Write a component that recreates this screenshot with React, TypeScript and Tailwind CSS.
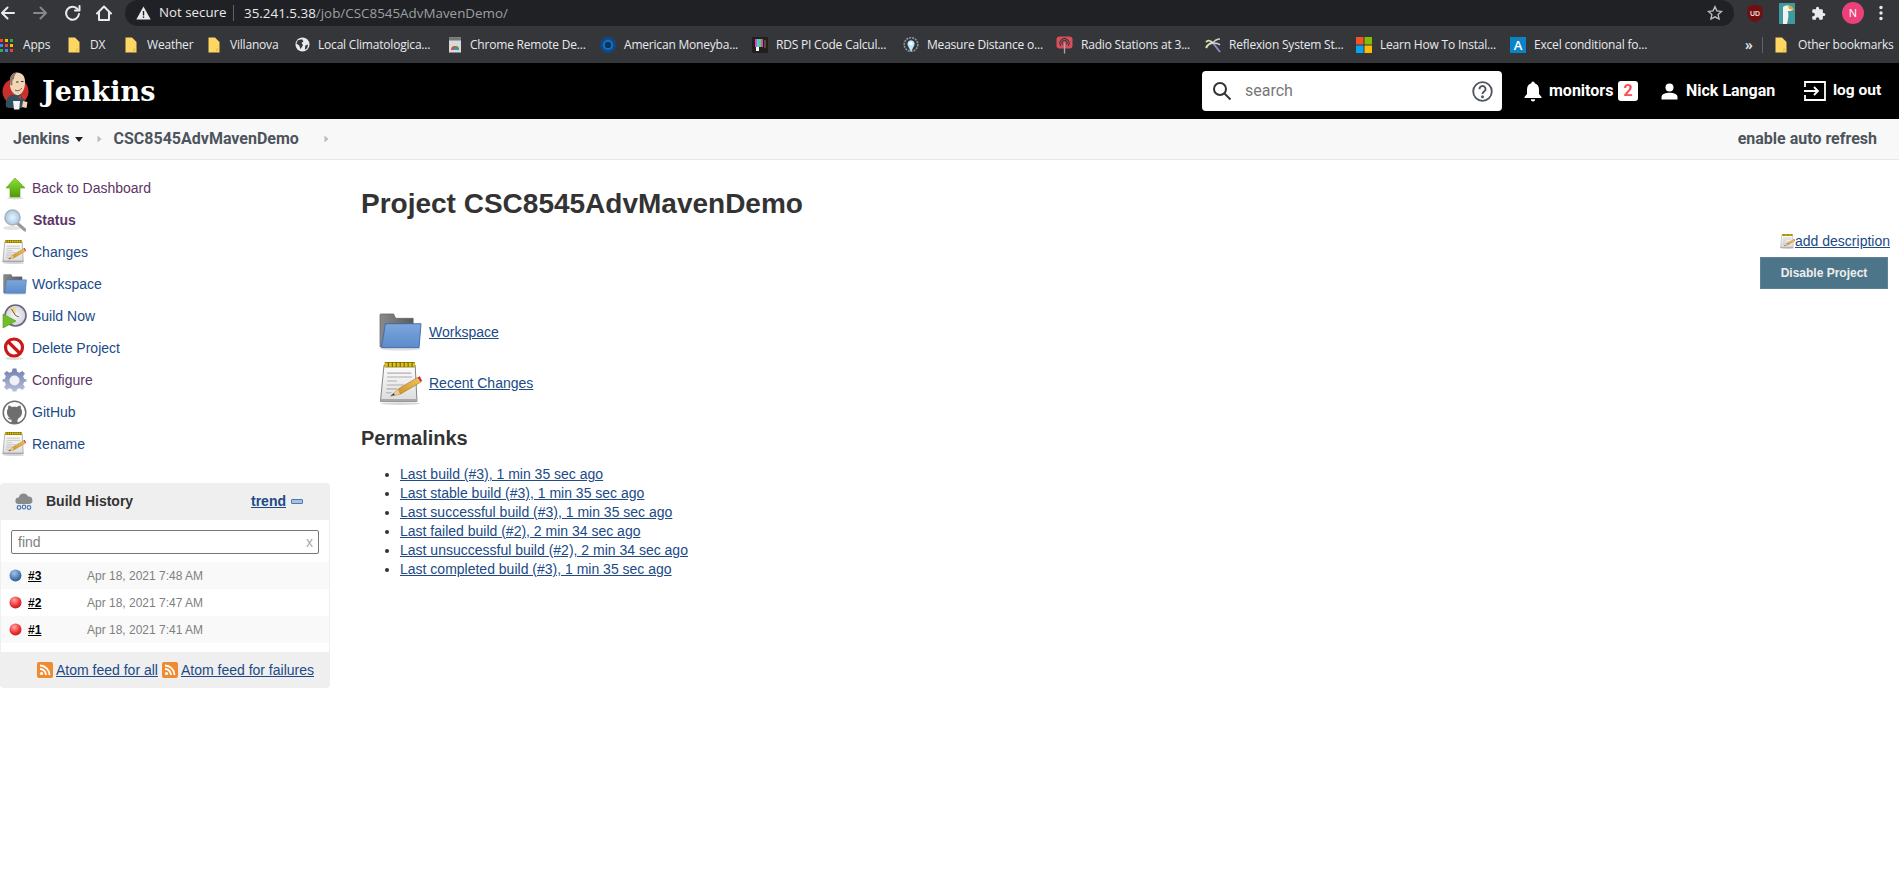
import React from "react";

const Folder = () => (
  <svg width="12" height="16" viewBox="0 0 12 16" className="shrink-0 mr-[2px]">
    <path d="M0.5 0.5H7L11.5 5V15.5H0.5Z" fill="#fdd663" />
    <path d="M8 15.5V11.5H11.5Z" fill="#f3c33f" />
  </svg>
);

const Globe = () => (
  <svg width="15" height="15" viewBox="0 0 16 16" className="shrink-0">
    <circle cx="8" cy="8" r="7.5" fill="#e8eaed" />
    <path d="M3 3.5L7.5 2.5L9 4.5L7 6.5L8.5 8.5L6 13L4.5 9L1.5 7ZM11 9L14 8L13 12L10.5 13.5Z" fill="#35363a" />
  </svg>
);

const ChromeRemote = () => (
  <svg width="14" height="16" viewBox="0 0 14 16" className="shrink-0">
    <rect x="1" y="0.5" width="12" height="15" fill="#d9d9d9" />
    <rect x="1" y="0.5" width="12" height="3" fill="#777" />
    <path d="M3 13A4 4 0 0 1 11 13Z" fill="#e94235" />
    <path d="M7 13V9A4 4 0 0 1 11 13Z" fill="#34a853" />
    <path d="M5 13A2 2 0 0 1 9 13Z" fill="#4285f4" />
  </svg>
);

const AmericanIcon = () => (
  <svg width="16" height="16" viewBox="0 0 16 16" className="shrink-0">
    <circle cx="8" cy="8" r="8" fill="#0d4a8a" />
    <circle cx="8" cy="8" r="5" fill="#1b75bc" />
    <circle cx="8" cy="8" r="3.2" fill="#083463" />
  </svg>
);

const RdsIcon = () => (
  <svg width="16" height="16" viewBox="0 0 16 16" className="shrink-0">
    <rect width="16" height="16" fill="#231f1c" />
    <rect x="3" y="2" width="2" height="8" fill="#ee3fc7" />
    <rect x="5" y="2" width="2" height="8" fill="#39d2ef" />
    <rect x="7" y="2" width="2" height="8" fill="#3ee64b" />
    <rect x="9" y="2" width="2" height="8" fill="#ee3fc7" />
    <rect x="4" y="10" width="3" height="4" fill="#fff" />
    <rect x="12" y="3" width="2" height="8" fill="#5a4b40" />
  </svg>
);

const MeasureIcon = () => (
  <svg width="16" height="16" viewBox="0 0 16 16" className="shrink-0">
    <circle cx="8" cy="7.5" r="6.8" fill="none" stroke="#8c969c" strokeWidth="1.6" strokeDasharray="2 1" />
    <path d="M8 15L4.8 8.5A3.6 3.6 0 1 1 11.2 8.5Z" fill="#bfe6fb" />
    <circle cx="8" cy="6.5" r="1.6" fill="#fff" />
  </svg>
);

const RadioIcon = () => (
  <svg width="17" height="18" viewBox="0 0 17 18" className="shrink-0">
    <rect x="0.5" y="0.5" width="16" height="12" rx="3" fill="#d8505a" />
    <path d="M5 10A4.5 4.5 0 1 1 12 10M6.6 8.5A2.5 2.5 0 1 1 10.4 8.5" fill="none" stroke="#35363a" strokeWidth="1.1" />
    <path d="M8.5 7V17.5" stroke="#aaa" strokeWidth="1.3" />
  </svg>
);

const PalmIcon = () => (
  <svg width="16" height="16" viewBox="0 0 16 16" className="shrink-0">
    <path d="M8 6L15 15" stroke="#8a8cc7" strokeWidth="2" />
    <path d="M8 6C5 3 3 3 1 5M8 6C5 6 3 7 1 11" fill="none" stroke="#d9dfb8" strokeWidth="2" />
    <path d="M8 6C10 3 12 2 15 2M8 6C10 6 13 6 15 8" fill="none" stroke="#cfcfcf" strokeWidth="1.6" />
  </svg>
);

const MsIcon = () => (
  <svg width="16" height="16" viewBox="0 0 16 16" className="shrink-0">
    <rect width="7.5" height="7.5" fill="#f35325" />
    <rect x="8.5" width="7.5" height="7.5" fill="#81bc06" />
    <rect y="8.5" width="7.5" height="7.5" fill="#05a6f0" />
    <rect x="8.5" y="8.5" width="7.5" height="7.5" fill="#ffba08" />
  </svg>
);

const Bookmark = ({ w, icon, label }: { w: string; icon: React.ReactNode; label: string }) => (
  <div className={`flex items-center gap-2 shrink-0 ${w}`}>
    {icon}
    <span className="whitespace-nowrap">{label}</span>
  </div>
);

const ChromeBar = () => (
  <div className="font-['Open_Sans',sans-serif] text-[#e8eaed]">
    <div className="h-[26px] bg-[#35363a] flex items-center relative">
      <div className="w-[125px] flex items-center pl-[1px] shrink-0">
        <svg width="124" height="20" viewBox="0 0 124 20" fill="none" strokeWidth="2" strokeLinecap="round" strokeLinejoin="round">
          <path d="M13 10H1.5M6.5 4.5L1 10L6.5 15.5" stroke="#e8eaed" />
          <path d="M33 10H44.5M39.5 4.5L45 10L39.5 15.5" stroke="#86888c" />
          <path d="M76.5 6A6.5 6.5 0 1 0 78 11" stroke="#e8eaed" />
          <path d="M78.5 3V7.5H74" stroke="#e8eaed" />
          <path d="M96 10.5L103 3.5L110 10.5M98 9V17H108V9" stroke="#e8eaed" />
        </svg>
      </div>
      <div className="h-[26px] w-[1609px] bg-[#202124] rounded-l-[14px] rounded-r-[14px] flex items-center text-[14px] shrink-0">
        <svg width="15" height="14" viewBox="0 0 15 14" className="ml-[11px] shrink-0">
          <path d="M7.5 0.5L14.7 13.5H0.3Z" fill="#e8eaed" />
          <rect x="6.8" y="5" width="1.4" height="4.5" fill="#202124" />
          <rect x="6.8" y="10.4" width="1.4" height="1.5" fill="#202124" />
        </svg>
        <span className="ml-[8px] whitespace-nowrap w-[68px] text-[13.3px]">Not secure</span>
        <span className="ml-[6px] w-px h-[16px] bg-[#5f6368]" />
        <span className="ml-[10px] whitespace-nowrap text-[13.4px]">
          <span className="text-[#e8eaed]">35.241.5.38</span>
          <span className="text-[#9aa0a6]">/job/CSC8545AdvMavenDemo/</span>
        </span>
        <div className="ml-auto mr-[11px]">
          <svg width="16" height="16" viewBox="0 0 24 24" fill="none" stroke="#bdc1c6" strokeWidth="2">
            <path d="M12 2.5L14.9 8.8L21.8 9.6L16.7 14.3L18.1 21.1L12 17.7L5.9 21.1L7.3 14.3L2.2 9.6L9.1 8.8Z" />
          </svg>
        </div>
      </div>
      <div className="flex items-center ml-[13px] gap-[16px]">
        <svg width="16" height="19" viewBox="0 0 16 19">
          <path d="M8 0.5L15.5 3V10C15.5 14 12 17 8 18.5C4 17 0.5 14 0.5 10V3Z" fill="#6f0f12" />
          <text x="8" y="11.5" textAnchor="middle" fontSize="7" fill="#f0d0d0" fontFamily="Liberation Sans" fontWeight="700">UD</text>
        </svg>
        <svg width="16" height="21" viewBox="0 0 16 21">
          <rect width="16" height="21" fill="#3f9a9d" />
          <path d="M4 4C8 1 14 3 14 7C12 8 10 8 9 8C10 12 9 17 8 21H4Z" fill="#f2f2f2" />
          <path d="M9 3C12 3 15 5 15 7L10 6Z" fill="#f2a51f" />
        </svg>
        <svg width="15" height="15" viewBox="0 0 24 24" fill="#e8eaed">
          <path d="M20.5 11H19V7a2 2 0 0 0-2-2h-4V3.5a2.5 2.5 0 0 0-5 0V5H4a2 2 0 0 0-2 2v3.8h1.5a2.7 2.7 0 0 1 0 5.4H2V20a2 2 0 0 0 2 2h3.8v-1.5a2.7 2.7 0 0 1 5.4 0V22H17a2 2 0 0 0 2-2v-4h1.5a2.5 2.5 0 0 0 0-5z" />
        </svg>
        <div className="w-[22px] h-[22px] rounded-full bg-[#ec407a] flex items-center justify-center text-[11px] text-white">N</div>
        <svg width="4" height="16" viewBox="0 0 4 16" fill="#e8eaed" className="ml-[-1px]">
          <circle cx="2" cy="2.5" r="1.7" />
          <circle cx="2" cy="8" r="1.7" />
          <circle cx="2" cy="13.5" r="1.7" />
        </svg>
      </div>
    </div>
    <div className="h-[37px] bg-[#35363a] flex items-center text-[12px] tracking-[-0.2px]">
      <div className="flex items-center gap-[10px] w-[68px] shrink-0">
        <svg width="13" height="14" viewBox="0 0 13 14" className="shrink-0">
          <rect x="0" y="1" width="3" height="3" fill="#ea4335" /><rect x="5" y="1" width="3" height="3" fill="#fbbc05" /><rect x="10" y="1" width="3" height="3" fill="#34a853" />
          <rect x="0" y="6" width="3" height="3" fill="#4285f4" /><rect x="5" y="6" width="3" height="3" fill="#ea4335" /><rect x="10" y="6" width="3" height="3" fill="#fbbc05" />
          <rect x="0" y="11" width="3" height="3" fill="#34a853" /><rect x="5" y="11" width="3" height="3" fill="#4285f4" /><rect x="10" y="11" width="3" height="3" fill="#ea4335" />
        </svg>
        <span>Apps</span>
      </div>
      <Bookmark w="w-[57px]" icon={<Folder />} label="DX" />
      <Bookmark w="w-[83px]" icon={<Folder />} label="Weather" />
      <Bookmark w="w-[87px]" icon={<Folder />} label="Villanova" />
      <Bookmark w="w-[153px]" icon={<Globe />} label="Local Climatologica..." />
      <Bookmark w="w-[152px]" icon={<ChromeRemote />} label="Chrome Remote De..." />
      <Bookmark w="w-[152px]" icon={<AmericanIcon />} label="American Moneyba..." />
      <Bookmark w="w-[151px]" icon={<RdsIcon />} label="RDS PI Code Calcul..." />
      <Bookmark w="w-[153px]" icon={<MeasureIcon />} label="Measure Distance o..." />
      <Bookmark w="w-[149px]" icon={<RadioIcon />} label="Radio Stations at 3..." />
      <Bookmark w="w-[151px]" icon={<PalmIcon />} label="Reflexion System St..." />
      <Bookmark w="w-[154px]" icon={<MsIcon />} label="Learn How To Instal..." />
      <Bookmark
        w="w-[235px]"
        icon={
          <span className="w-[16px] h-[16px] bg-[#0a84c6] text-white text-[13px] leading-[16px] text-center font-semibold shrink-0">A</span>
        }
        label="Excel conditional fo..."
      />
      <span className="w-[17px] text-[14px] font-semibold shrink-0">»</span>
      <span className="w-px h-[16px] bg-[#5f6368] mr-[12px] shrink-0" />
      <Folder />
      <span className="ml-[9px] whitespace-nowrap">Other bookmarks</span>
    </div>
  </div>
);

const JenkinsLogo = () => (
  <svg width="29" height="38" viewBox="0 0 29 38" className="shrink-0">
    <circle cx="14.5" cy="19.5" r="13" fill="#c9302c" />
    <path d="M5 35C4 30 6 25 10 23L19 22C22 24 23 28 23 30L21 36H8Z" fill="#335061" />
    <path d="M9 9C9 3.5 12 0.5 16 0.5C21 0.5 24 4 24 10C24 16 22 21 18 23C14 24 10 20 9 14Z" fill="#f0d6b7" />
    <path d="M9 9C9 3.5 12 0.5 16 0.5C13.5 2.5 13 5 13 7C11.5 7.5 11 9 11.5 13L9.5 13.5Z" fill="#8f7766" />
    <path d="M14 18C16.5 19.5 19 18.5 21 16" fill="none" stroke="#7a4a3a" strokeWidth="1" />
    <path d="M15 10h2.5M20 9.5h2.5" stroke="#333" strokeWidth="1.1" />
    <path d="M17 25L20.5 23L19.5 27ZM21 23L25 24L22 27Z" fill="#d33833" />
    <path d="M12 29H19L18.3 37.5H13Z" fill="#f5f5f5" />
    <path d="M22 29L26.5 30L25.5 36L21 35Z" fill="#f0d6b7" />
  </svg>
);

const Chev = () => (
  <svg width="5" height="8" viewBox="0 0 5 8" className="shrink-0"><path d="M0.5 0.5L4.5 4L0.5 7.5Z" fill="#bcbcbc" /></svg>
);

const TopNav = () => (
  <div className="h-[56px] bg-black flex items-center text-white font-['Roboto',sans-serif] font-bold text-[16px]">
    <div className="w-[42px] pl-[1px] shrink-0 flex items-center"><JenkinsLogo /></div>
    <span className="font-['DejaVu_Serif',serif] text-[27px] w-[1160px] shrink-0 leading-none">Jenkins</span>
    <div className="w-[300px] h-[40px] bg-white rounded-[4px] flex items-center shrink-0">
      <svg width="20" height="20" viewBox="0 0 20 20" fill="none" stroke="#333" strokeWidth="2" className="ml-[10px] shrink-0">
        <circle cx="8" cy="8" r="6" /><path d="M12.5 12.5L18.5 18.5" />
      </svg>
      <span className="ml-[13px] text-[16px] font-normal text-[#777]">search</span>
      <svg width="21" height="21" viewBox="0 0 21 21" fill="none" stroke="#4d545d" strokeWidth="1.8" className="ml-auto mr-[9px] shrink-0">
        <circle cx="10.5" cy="10.5" r="9.3" />
        <path d="M7.5 8.2A3 3 0 1 1 12 10.6C11 11.2 10.5 11.8 10.5 13" />
        <circle cx="10.5" cy="15.8" r="0.6" fill="#4d545d" />
      </svg>
    </div>
    <svg width="18" height="21" viewBox="0 0 18 21" fill="white" className="ml-[22px] shrink-0">
      <path d="M9 0.5A1.7 1.7 0 0 1 10.7 2.2C13.7 3 15 5.5 15 8.5V13L17.5 16V17H0.5V16L3 13V8.5C3 5.5 4.3 3 7.3 2.2A1.7 1.7 0 0 1 9 0.5Z" />
      <path d="M6.8 18.2H11.2A2.2 2.2 0 0 1 6.8 18.2Z" />
    </svg>
    <span className="ml-[7px] w-[69px] shrink-0">monitors</span>
    <span className="w-[20px] h-[20px] rounded-[3px] bg-white text-[#ff4d54] flex items-center justify-center shrink-0">2</span>
    <svg width="17" height="17" viewBox="0 0 17 17" fill="white" className="ml-[23px] shrink-0">
      <circle cx="8.5" cy="4.5" r="4" />
      <path d="M0.5 16.5V14C0.5 11 5 9.7 8.5 9.7C12 9.7 16.5 11 16.5 14V16.5Z" />
    </svg>
    <span className="ml-[8px] w-[118px] shrink-0 whitespace-nowrap">Nick Langan</span>
    <svg width="22" height="20" viewBox="0 0 22 20" fill="none" stroke="white" strokeWidth="1.8" className="shrink-0">
      <path d="M1 6V1H21V19H1V14" />
      <path d="M0 10H14M10 6L14 10L10 14" />
    </svg>
    <span className="ml-[7px] whitespace-nowrap text-[15.5px]">log out</span>
  </div>
);

const Breadcrumb = () => (
  <div className="h-[41px] bg-[#f8f8f8] border-b border-[#e8e8e8] flex items-center font-['Roboto',sans-serif] font-bold text-[16px] text-[#4d545d]">
    <span className="ml-[13px]">Jenkins</span>
    <svg width="8" height="5" viewBox="0 0 8 5" className="ml-[5px] shrink-0"><path d="M0 0H8L4 5Z" fill="#222" /></svg>
    <span className="ml-[14px]"><Chev /></span>
    <span className="ml-[12px]">CSC8545AdvMavenDemo</span>
    <span className="ml-[25px]"><Chev /></span>
    <span className="ml-auto mr-[22px]">enable auto refresh</span>
  </div>
);

const NotepadIcon = ({ size = 24 }: { size?: number }) => (
  <svg width={size} height={size} viewBox="0 0 24 24" className="shrink-0">
    <defs>
      <linearGradient id="np" x1="0" y1="0" x2="0" y2="1"><stop offset="0" stopColor="#fdfdfd" /><stop offset="1" stopColor="#dcdcdc" /></linearGradient>
      <linearGradient id="pc" x1="0" y1="1" x2="1" y2="0"><stop offset="0" stopColor="#c98a1f" /><stop offset="1" stopColor="#f4c35a" /></linearGradient>
    </defs>
    <ellipse cx="12" cy="23.2" rx="11" ry="0.8" fill="#d8d8d8" />
    <path d="M2.8 1.8H20.2L21.2 22H0.8Z" fill="url(#np)" stroke="#777" strokeWidth="0.5" />
    <path d="M0.8 20.6H21.2V22H0.8Z" fill="#a8a8a8" />
    <path d="M3.2 1.5H20" stroke="#7a6a00" strokeWidth="3" />
    <path d="M3.4 1.5H20" stroke="#e0c31a" strokeWidth="2.2" strokeDasharray="1.5 0.7" />
    <path d="M4.5 6.2H18M4.5 8.4H18.3M4.5 10.6H10M4.3 12.8H14M4.1 15H10M4 17.2H7" stroke="#aeaeae" strokeWidth="0.6" />
    <path d="M6.5 19L10.5 15.2L21.6 8.6L23.4 11.2L11.8 18Z" fill="url(#pc)" stroke="#8a6a2a" strokeWidth="0.3" />
    <path d="M21.6 8.6L23.4 11.2L24 10.4L22.8 8Z" fill="#d8232a" />
    <path d="M6.5 19L10.5 15.2L11.8 18Z" fill="#e9c99a" />
    <path d="M6.5 19L8.2 17.4L8.8 18.4Z" fill="#333" />
  </svg>
);

const FolderIcon = ({ size = 24, h = 21, id = "f" }: { size?: number; h?: number; id?: string }) => (
  <svg width={size} height={h} viewBox="0 0 44 38" className="shrink-0">
    <defs>
      <linearGradient id={id} x1="0" y1="0" x2="0" y2="1"><stop offset="0" stopColor="#7da6dc" /><stop offset="1" stopColor="#5b8ccb" /></linearGradient>
      <linearGradient id={`${id}b`} x1="0" y1="0" x2="1" y2="0"><stop offset="0" stopColor="#8a8a8a" /><stop offset="1" stopColor="#5c5c5c" /></linearGradient>
    </defs>
    <ellipse cx="22" cy="36" rx="21" ry="2" fill="#dedede" />
    <path d="M1 34V1.5Q1 0.5 2 0.5H15L17 5H35V11H7L4 34Z" fill={`url(#${id}b)`} stroke="#555" strokeWidth="0.6" />
    <path d="M6.5 10.5H43L41 35H2.5Z" fill={`url(#${id})`} stroke="#3a69a6" strokeWidth="0.9" />
  </svg>
);

const ArrowUp = () => (
  <svg width="24" height="24" viewBox="0 0 24 24" className="shrink-0">
    <defs><linearGradient id="au" x1="0" y1="0" x2="0" y2="1"><stop offset="0" stopColor="#8ae234" /><stop offset="1" stopColor="#4e9a06" /></linearGradient></defs>
    <ellipse cx="13" cy="22" rx="8" ry="1.5" fill="#ddd" />
    <path d="M13 2L23 12H18V21H8V12H4Z" fill="url(#au)" stroke="#5a9a10" strokeWidth="0.6" />
  </svg>
);

const SearchIcon = () => (
  <svg width="24" height="24" viewBox="0 0 24 24" className="shrink-0">
    <defs><radialGradient id="sg"><stop offset="0" stopColor="#e8f3fc" /><stop offset="1" stopColor="#a8c8e8" /></radialGradient></defs>
    <ellipse cx="10" cy="20" rx="9" ry="2" fill="#e4e4e4" />
    <path d="M15 15L23 22" stroke="#9a9a9a" strokeWidth="3" strokeLinecap="round" />
    <circle cx="10.5" cy="9.5" r="7.5" fill="url(#sg)" stroke="#aab2bb" strokeWidth="1.6" />
  </svg>
);

const BuildIcon = () => (
  <svg width="25" height="25" viewBox="0 0 25 25" className="shrink-0">
    <defs><radialGradient id="bg"><stop offset="0" stopColor="#f8f8f8" /><stop offset="1" stopColor="#d2d2d8" /></radialGradient></defs>
    <circle cx="13.5" cy="11.5" r="10.5" fill="url(#bg)" stroke="#66668a" strokeWidth="1.6" />
    <path d="M13.5 11.5L7.5 4.5A9 9 0 0 1 13.5 2.5Z" fill="#ecd98e" />
    <path d="M13.5 11.5L9.5 5M13.5 11.5L17 13" stroke="#555" strokeWidth="0.9" />
    <path d="M1 10L14 17L1 24Z" fill="#6fbf2a" stroke="#4e9a06" strokeWidth="0.6" />
  </svg>
);

const NoIcon = () => (
  <svg width="24" height="24" viewBox="0 0 24 24" className="shrink-0">
    <ellipse cx="12" cy="22.5" rx="9" ry="1.5" fill="#ddd" />
    <circle cx="12" cy="11.5" r="8.5" fill="#fff" stroke="#cc1717" strokeWidth="3.2" />
    <path d="M6 5.5L18 17.5" stroke="#cc1717" strokeWidth="3.2" />
  </svg>
);

const GearIcon = () => (
  <svg width="25" height="25" viewBox="0 0 25 25" className="shrink-0">
    <defs><linearGradient id="gg" x1="0" y1="0" x2="0" y2="1"><stop offset="0" stopColor="#6f80ae" /><stop offset="1" stopColor="#b9bfda" /></linearGradient></defs>
    <path
      d="M10.5 1H14.5L15.2 4.4L17.8 5.5L20.7 3.6L23.4 6.3L21.5 9.2L22.6 11.8L25 12.5V14.5L22.6 15.2L21.5 17.8L23.4 20.7L20.7 23.4L17.8 21.5L15.2 22.6L14.5 25H10.5L9.8 22.6L7.2 21.5L4.3 23.4L1.6 20.7L3.5 17.8L2.4 15.2L0 14.5V12.5L2.4 11.8L3.5 9.2L1.6 6.3L4.3 3.6L7.2 5.5L9.8 4.4Z"
      fill="url(#gg)"
      transform="translate(0.5 -0.5) scale(0.96)"
    />
    <circle cx="12.5" cy="12.5" r="5" fill="#f1f1f6" />
  </svg>
);

const GithubIcon = () => (
  <svg width="25" height="25" viewBox="0 0 25 25" className="shrink-0">
    <circle cx="12.5" cy="12.5" r="11.3" fill="#fff" stroke="#6e6e6e" strokeWidth="1.5" />
    <path
      d="M9.5 23V19.5C7 20 6 19 5.5 17.5C6.5 18 7.5 18.5 8.5 18.2C7 17.5 5 16 5 12C5 10.5 5.3 9.6 6.2 8.6C6 7.6 6 6.6 6.5 5.5C8 5.5 9 6.3 10 7C11.5 6.6 13.5 6.6 15 7C16 6.3 17 5.5 18.5 5.5C19 6.6 19 7.6 18.8 8.6C19.7 9.6 20 10.5 20 12C20 16 18 17.5 16.5 18C17 18.5 15.5 19.5 15.5 20V23Z"
      fill="#6e6e6e"
    />
  </svg>
);

const Task = ({ icon, label, color, bold }: { icon: React.ReactNode; label: string; color: string; bold?: boolean }) => (
  <div className="h-[32px] flex items-center">
    <span className="w-[32px] pl-[2px] flex items-center shrink-0">{icon}</span>
    <span className={`text-[14px] ${color} ${bold ? "font-bold text-[13px] ml-[1px]" : ""}`}>{label}</span>
  </div>
);

const Ball = ({ color }: { color: "blue" | "red" }) => (
  <svg width="13" height="13" viewBox="0 0 13 13" className="shrink-0">
    <defs>
      <radialGradient id="ballblue" cx="0.4" cy="0.3" r="0.8"><stop offset="0" stopColor="#a9c4e6" /><stop offset="0.6" stopColor="#4a7bb5" /><stop offset="1" stopColor="#2a4f80" /></radialGradient>
      <radialGradient id="ballred" cx="0.4" cy="0.3" r="0.8"><stop offset="0" stopColor="#ffa8a8" /><stop offset="0.6" stopColor="#ee2f33" /><stop offset="1" stopColor="#b01a1e" /></radialGradient>
    </defs>
    <circle cx="6.5" cy="6.5" r="6" fill={color === "blue" ? "url(#ballblue)" : "url(#ballred)"} />
  </svg>
);

const Rss = () => (
  <svg width="16" height="16" viewBox="0 0 16 16" className="shrink-0">
    <rect width="16" height="16" rx="2" fill="#f08a30" />
    <circle cx="4.5" cy="11.5" r="1.6" fill="#fff" />
    <path d="M3 7A6 6 0 0 1 9 13M3 3.5A9.5 9.5 0 0 1 12.5 13" fill="none" stroke="#fff" strokeWidth="1.8" />
  </svg>
);

const BuildRow = ({ n, date, ball, shaded }: { n: string; date: string; ball: "blue" | "red"; shaded?: boolean }) => (
  <div className={`h-[27px] flex items-center text-[12px] ${shaded ? "bg-[#f9f9f9]" : "bg-white"}`}>
    <span className="ml-[8px] w-[19px] shrink-0 flex"><Ball color={ball} /></span>
    <span className="font-bold underline text-black w-[59px] shrink-0">{n}</span>
    <span className="text-[#808080]">{date}</span>
  </div>
);

const BuildHistory = () => (
  <div className="w-[330px] mt-[23px] rounded-[4px] overflow-hidden bg-[#efefef] pb-0">
    <div className="h-[37px] flex items-center">
      <svg width="18" height="18" viewBox="0 0 18 18" className="ml-[15px] shrink-0">
        <path d="M3.5 11A3.2 3.2 0 0 1 3.8 4.6A4.8 4.8 0 0 1 13 3.6A3.7 3.7 0 0 1 14.3 11Z" fill="#8a8a8a" />
        <g fill="none" stroke="#4a7bb5" strokeWidth="1.2"><circle cx="4" cy="14.5" r="1.8" /><circle cx="9" cy="14" r="1.8" /><circle cx="14" cy="14.5" r="1.8" /></g>
      </svg>
      <span className="ml-[13px] text-[14px] font-bold text-[#333] w-[205px] shrink-0">Build History</span>
      <span className="text-[14px] font-bold underline text-[#204a87]">trend</span>
      <span className="ml-[5px] w-[12px] h-[5px] bg-[#a9c1e0] border border-[#4a7bb5] rounded-[1px] shrink-0" />
    </div>
    <div className="mx-[1px] bg-white">
      <div className="h-[42px] px-[10px] pt-[10px]">
        <div className="h-[24px] border border-[#777] rounded-[2px] flex items-center justify-between pl-[6px] pr-[5px] text-[14px] text-[#808080]">
          <span>find</span>
          <span className="text-[#aaa]">x</span>
        </div>
      </div>
      <div className="pb-[9px]">
        <BuildRow n="#3" date="Apr 18, 2021 7:48 AM" ball="blue" shaded />
        <BuildRow n="#2" date="Apr 18, 2021 7:47 AM" ball="red" />
        <BuildRow n="#1" date="Apr 18, 2021 7:41 AM" ball="red" shaded />
      </div>
    </div>
    <div className="h-[36px] flex items-center text-[14px] text-[#204a87] pl-[37px]">
      <Rss />
      <span className="ml-[3px] underline">Atom feed for all</span>
      <span className="ml-[4px]"><Rss /></span>
      <span className="ml-[3px] underline">Atom feed for failures</span>
    </div>
  </div>
);

const Sidebar = () => (
  <div className="w-[330px] shrink-0 pt-[12px]">
    <Task icon={<ArrowUp />} label="Back to Dashboard" color="text-[#5c3566]" />
    <Task icon={<SearchIcon />} label="Status" color="text-[#5c3566]" bold />
    <Task icon={<NotepadIcon />} label="Changes" color="text-[#204a87]" />
    <Task icon={<span className="ml-[1px] flex"><FolderIcon /></span>} label="Workspace" color="text-[#204a87]" />
    <Task icon={<BuildIcon />} label="Build Now" color="text-[#204a87]" />
    <Task icon={<NoIcon />} label="Delete Project" color="text-[#204a87]" />
    <Task icon={<GearIcon />} label="Configure" color="text-[#5c3566]" />
    <Task icon={<GithubIcon />} label="GitHub" color="text-[#204a87]" />
    <Task icon={<NotepadIcon />} label="Rename" color="text-[#204a87]" />
    <BuildHistory />
  </div>
);

const permalinks = [
  "Last build (#3), 1 min 35 sec ago",
  "Last stable build (#3), 1 min 35 sec ago",
  "Last successful build (#3), 1 min 35 sec ago",
  "Last failed build (#2), 2 min 34 sec ago",
  "Last unsuccessful build (#2), 2 min 34 sec ago",
  "Last completed build (#3), 1 min 35 sec ago",
];

const Main = () => (
  <div className="flex-1 flex justify-between pl-[31px] pr-[9px]">
    <div>
      <h1 className="text-[28px] font-bold text-[#333] leading-[32px] mt-[28px]">Project CSC8545AdvMavenDemo</h1>
      <div className="mt-[93px] ml-[18px] flex items-center gap-[7px] h-[38px]">
        <FolderIcon size={43} h={38} id="f2" />
        <span className="text-[14px] underline text-[#204a87]">Workspace</span>
      </div>
      <div className="mt-[10px] ml-[18px] flex items-center gap-[7px] h-[44px]">
        <NotepadIcon size={43} />
        <span className="text-[14px] underline text-[#204a87]">Recent Changes</span>
      </div>
      <h2 className="text-[20px] font-bold text-[#333] leading-[24px] mt-[21px]">Permalinks</h2>
      <ul className="mt-[15px] list-disc pl-[39px] text-[14px] leading-[19px] text-[#333]">
        {permalinks.map((p) => (
          <li key={p}><span className="underline text-[#204a87]">{p}</span></li>
        ))}
      </ul>
    </div>
    <div className="pt-[72px] flex flex-col items-end">
      <div className="flex items-center h-[18px]">
        <NotepadIcon size={15} />
        <span className="text-[14px] underline text-[#204a87]">add description</span>
      </div>
      <div className="mt-[7px] mr-[2px] w-[128px] h-[32px] bg-[#4d758a] border border-[#5d8296] flex items-center justify-center text-[12px] font-bold text-[#eeeeee]">
        Disable Project
      </div>
    </div>
  </div>
);

export default function App() {
  return (
    <div className="min-h-[870px] bg-white font-['Liberation_Sans',Arial,sans-serif] flex flex-col">
      <ChromeBar />
      <TopNav />
      <Breadcrumb />
      <div className="flex flex-1">
        <Sidebar />
        <Main />
      </div>
    </div>
  );
}
